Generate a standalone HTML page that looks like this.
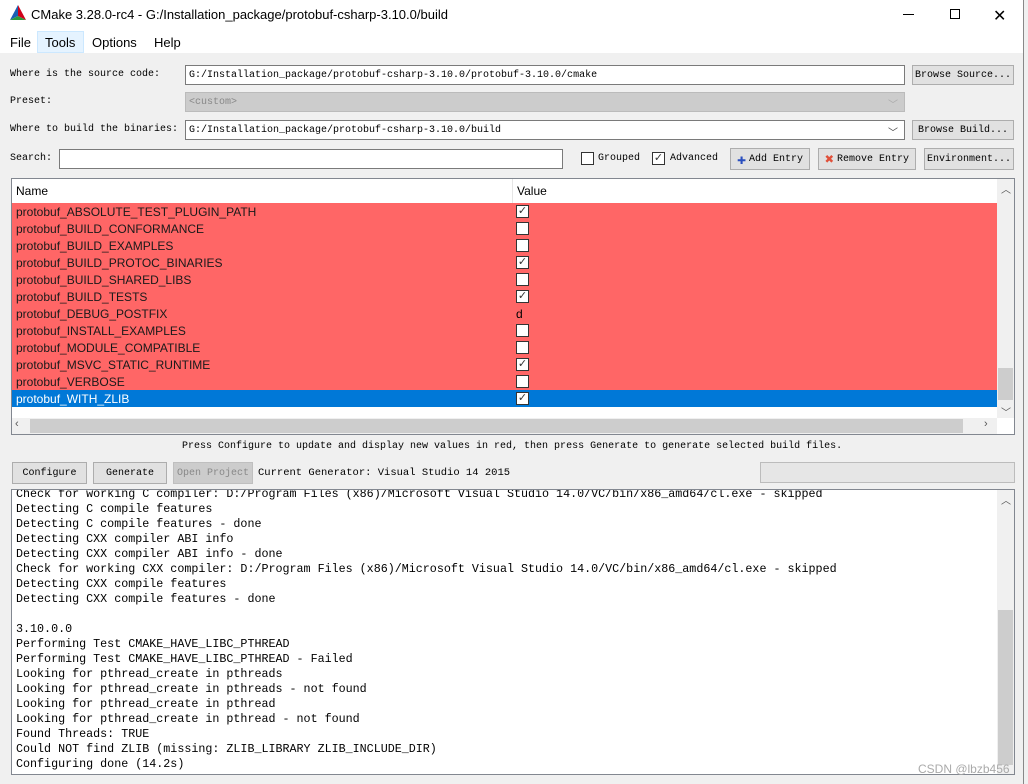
<!DOCTYPE html>
<html><head><meta charset="utf-8"><style>
*{margin:0;padding:0;box-sizing:border-box}
body{width:1028px;height:784px;background:#f0f0f0;position:relative;overflow:hidden;font-family:"Liberation Sans",sans-serif;color:#000}
.a{position:absolute}
.m{font-family:"Liberation Mono",monospace;font-size:10px;white-space:pre}
.btn{position:absolute;background:#e1e1e1;border:1px solid #adadad;font-family:"Liberation Mono",monospace;font-size:10px;display:flex;align-items:center;justify-content:center;white-space:pre}
.inp{position:absolute;background:#fff;border:1px solid #7a7a7a;font-family:"Liberation Mono",monospace;font-size:10px;padding-left:3px;display:flex;align-items:center;white-space:pre}
.cb{position:absolute;width:13px;height:13px;border:1px solid #333;background:#fff;font-size:11px;line-height:11px;text-align:center;color:#333}
.row{position:absolute;left:12px;width:985px;height:17px;background:#ff6666;font-size:12px;line-height:18px;padding-left:4px;color:#1a1a1a}
.out{font-family:"Liberation Mono",monospace;font-size:11.7px;line-height:15px;white-space:pre;position:absolute}
</style></head><body>
<div class="a" style="left:0;top:0;width:1023px;height:53px;background:#fff"></div>
<div class="a" style="left:1023px;top:0;width:1px;height:784px;background:#888"></div>
<svg class="a" style="left:10px;top:5px" width="17" height="17" viewBox="0 0 17 17"><polygon points="8,0 0,15 8,11" fill="#1a5fb4"/><polygon points="8,0 16,15 8,11" fill="#d0021b"/><polygon points="0,15 16,15 8,11" fill="#2d9a3c"/></svg>
<div class="a" style="left:31px;top:7px;font-size:13px">CMake 3.28.0-rc4 - G:/Installation_package/protobuf-csharp-3.10.0/build</div>
<div class="a" style="left:903px;top:14px;width:11px;height:1px;background:#000"></div>
<div class="a" style="left:950px;top:9px;width:10px;height:10px;border:1px solid #000"></div>
<div class="a" style="left:993px;top:6px;font-size:16px">✕</div>
<div class="a" style="left:37px;top:31px;width:47px;height:22px;background:#e5f3ff;border:1px solid #cce8ff"></div>
<div class="a" style="left:10px;top:35px;font-size:13px">File</div>
<div class="a" style="left:45px;top:35px;font-size:13px">Tools</div>
<div class="a" style="left:92px;top:35px;font-size:13px">Options</div>
<div class="a" style="left:154px;top:35px;font-size:13px">Help</div>

<div class="a m" style="left:10px;top:69px">Where is the source code:</div>
<div class="inp" style="left:185px;top:65px;width:720px;height:20px">G:/Installation_package/protobuf-csharp-3.10.0/protobuf-3.10.0/cmake</div>
<div class="btn" style="left:912px;top:65px;width:102px;height:20px">Browse Source...</div>
<div class="a m" style="left:10px;top:96px">Preset:</div>
<div class="inp" style="left:185px;top:92px;width:720px;height:20px;background:#cccccc;border-color:#bbb;color:#888">&lt;custom&gt;</div>
<div class="a" style="left:888px;top:96px;color:#aaa;font-size:10px">﹀</div>
<div class="a m" style="left:10px;top:124px">Where to build the binaries:</div>
<div class="inp" style="left:185px;top:120px;width:720px;height:20px">G:/Installation_package/protobuf-csharp-3.10.0/build</div>
<div class="a" style="left:888px;top:124px;color:#444;font-size:10px">﹀</div>
<div class="btn" style="left:912px;top:120px;width:102px;height:20px">Browse Build...</div>
<div class="a m" style="left:10px;top:153px">Search:</div>
<div class="inp" style="left:59px;top:149px;width:504px;height:20px"></div>
<div class="cb" style="left:581px;top:152px"></div>
<div class="a m" style="left:598px;top:153px">Grouped</div>
<div class="cb" style="left:652px;top:152px">✓</div>
<div class="a m" style="left:670px;top:153px">Advanced</div>
<div class="btn" style="left:730px;top:148px;width:80px;height:22px"><span style="color:#2a4fbf;font-size:15px;font-weight:bold;margin-right:3px">✚</span>Add Entry</div>
<div class="btn" style="left:818px;top:148px;width:98px;height:22px"><span style="color:#e0503a;font-size:15px;font-weight:bold;margin-right:3px">✖</span>Remove Entry</div>
<div class="btn" style="left:924px;top:148px;width:90px;height:22px">Environment...</div>

<div class="a" style="left:11px;top:178px;width:1004px;height:257px;background:#fff;border:1px solid #828790"></div>
<div class="a" style="left:16px;top:184px;font-size:12px">Name</div>
<div class="a" style="left:512px;top:179px;width:1px;height:24px;background:#e5e5e5"></div>
<div class="a" style="left:517px;top:184px;font-size:12px">Value</div>
<div class="row" style="top:203px">protobuf_ABSOLUTE_TEST_PLUGIN_PATH</div>
<div class="row" style="top:220px">protobuf_BUILD_CONFORMANCE</div>
<div class="row" style="top:237px">protobuf_BUILD_EXAMPLES</div>
<div class="row" style="top:254px">protobuf_BUILD_PROTOC_BINARIES</div>
<div class="row" style="top:271px">protobuf_BUILD_SHARED_LIBS</div>
<div class="row" style="top:288px">protobuf_BUILD_TESTS</div>
<div class="row" style="top:305px">protobuf_DEBUG_POSTFIX</div>
<div class="row" style="top:322px">protobuf_INSTALL_EXAMPLES</div>
<div class="row" style="top:339px">protobuf_MODULE_COMPATIBLE</div>
<div class="row" style="top:356px">protobuf_MSVC_STATIC_RUNTIME</div>
<div class="row" style="top:373px">protobuf_VERBOSE</div>
<div class="row" style="top:390px;background:#0078d7;color:#fff">protobuf_WITH_ZLIB</div>
<div class="cb" style="left:516px;top:205px">✓</div>
<div class="cb" style="left:516px;top:222px"></div>
<div class="cb" style="left:516px;top:239px"></div>
<div class="cb" style="left:516px;top:256px">✓</div>
<div class="cb" style="left:516px;top:273px"></div>
<div class="cb" style="left:516px;top:290px">✓</div>
<div class="a" style="left:516px;top:307px;font-size:12px">d</div>
<div class="cb" style="left:516px;top:324px"></div>
<div class="cb" style="left:516px;top:341px"></div>
<div class="cb" style="left:516px;top:358px">✓</div>
<div class="cb" style="left:516px;top:375px"></div>
<div class="cb" style="left:516px;top:392px">✓</div>
<div class="a" style="left:997px;top:179px;width:17px;height:239px;background:#f0f0f0"></div>
<div class="a" style="left:998px;top:368px;width:15px;height:32px;background:#cdcdcd"></div>
<div class="a" style="left:1001px;top:181px;font-size:10px;color:#555">︿</div>
<div class="a" style="left:1001px;top:404px;font-size:10px;color:#555">﹀</div>
<div class="a" style="left:12px;top:418px;width:985px;height:16px;background:#f0f0f0"></div>
<div class="a" style="left:30px;top:419px;width:933px;height:14px;background:#cdcdcd"></div>
<div class="a" style="left:15px;top:418px;font-size:11px;color:#555">‹</div>
<div class="a" style="left:984px;top:418px;font-size:11px;color:#555">›</div>

<div class="a m" style="left:182px;top:441px;font-size:10px">Press Configure to update and display new values in red, then press Generate to generate selected build files.</div>
<div class="btn" style="left:12px;top:462px;width:75px;height:22px">Configure</div>
<div class="btn" style="left:93px;top:462px;width:74px;height:22px">Generate</div>
<div class="btn" style="left:173px;top:462px;width:80px;height:22px;background:#ccc;border-color:#bfbfbf;color:#888">Open Project</div>
<div class="a m" style="left:258px;top:467px;font-size:10.5px">Current Generator: Visual Studio 14 2015</div>
<div class="a" style="left:760px;top:462px;width:255px;height:21px;background:#e6e6e6;border:1px solid #bcbcbc"></div>

<div class="a" style="left:11px;top:489px;width:1004px;height:286px;background:#fff;border:1px solid #828790;overflow:hidden">
<div class="out" style="left:4px;top:-3px">Check for working C compiler: D:/Program Files (x86)/Microsoft Visual Studio 14.0/VC/bin/x86_amd64/cl.exe - skipped
Detecting C compile features
Detecting C compile features - done
Detecting CXX compiler ABI info
Detecting CXX compiler ABI info - done
Check for working CXX compiler: D:/Program Files (x86)/Microsoft Visual Studio 14.0/VC/bin/x86_amd64/cl.exe - skipped
Detecting CXX compile features
Detecting CXX compile features - done

3.10.0.0
Performing Test CMAKE_HAVE_LIBC_PTHREAD
Performing Test CMAKE_HAVE_LIBC_PTHREAD - Failed
Looking for pthread_create in pthreads
Looking for pthread_create in pthreads - not found
Looking for pthread_create in pthread
Looking for pthread_create in pthread - not found
Found Threads: TRUE
Could NOT find ZLIB (missing: ZLIB_LIBRARY ZLIB_INCLUDE_DIR)
Configuring done (14.2s)</div>
<div class="a" style="left:985px;top:0;width:17px;height:284px;background:#f0f0f0"></div>
<div class="a" style="left:986px;top:120px;width:15px;height:155px;background:#cdcdcd"></div>
<div class="a" style="left:989px;top:2px;font-size:10px;color:#555">︿</div>
</div>
<div class="a" style="left:918px;top:762px;font-size:12px;color:#aaa">CSDN @lbzb456</div>
</body></html>
